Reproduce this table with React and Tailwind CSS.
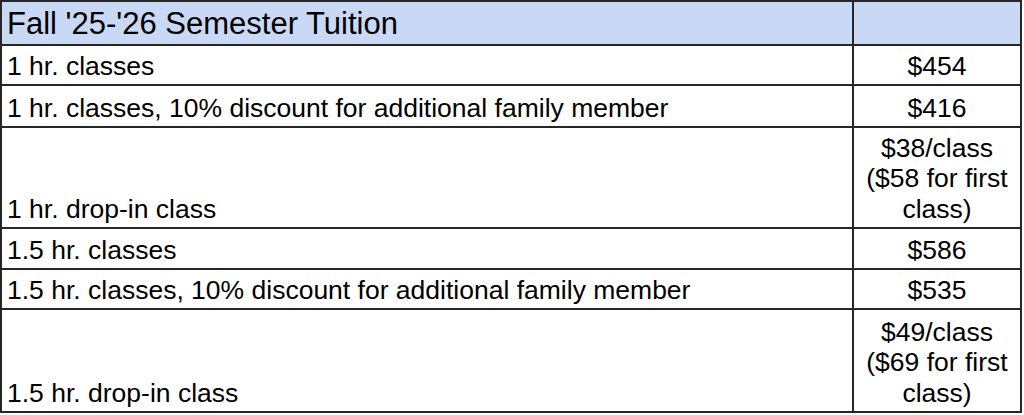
import React from "react";

const rows = [
  { label: "1 hr. classes", price: ["$454"], h: "h-[40px]" },
  { label: "1 hr. classes, 10% discount for additional family member", price: ["$416"], h: "h-[42px]" },
  { label: "1 hr. drop-in class", price: ["$38/class", "($58 for first", "class)"], h: "h-[101px]" },
  { label: "1.5 hr. classes", price: ["$586"], h: "h-[41px]" },
  { label: "1.5 hr. classes, 10% discount for additional family member", price: ["$535"], h: "h-[40px]" },
  { label: "1.5 hr. drop-in class", price: ["$49/class", "($69 for first", "class)"], h: "h-[103px]" },
];

export default function App() {
  return (
    <div className="w-[1024px] h-[415px] bg-white" style={{ fontFamily: '"Liberation Sans", Arial, sans-serif' }}>
      <div className="w-[1022px] border-l-2 border-t-2 border-[#262626] text-black">
        <div className="flex h-[44px] bg-[#c9d8f4]">
          <div className="w-[852px] border-r-2 border-b-2 border-[#262626] flex items-end pl-[5px] pb-[3px] text-[31px] leading-[34px]">
            Fall '25-'26 Semester Tuition
          </div>
          <div className="w-[168px] border-r-2 border-b-2 border-[#262626]"></div>
        </div>
        {rows.map((r, i) => (
          <div key={i} className={`flex ${r.h}`}>
            <div className="w-[852px] border-r-2 border-b-2 border-[#262626] flex items-end pl-[5px] pb-[3px] text-[26.5px] leading-[30px] whitespace-nowrap">
              {r.label}
            </div>
            <div className="w-[168px] border-r-2 border-b-2 border-[#262626] flex flex-col justify-end items-center pb-[3px] text-[26.5px] leading-[30.5px] whitespace-nowrap">
              {r.price.map((p, j) => (
                <div key={j}>{p}</div>
              ))}
            </div>
          </div>
        ))}
      </div>
    </div>
  );
}
